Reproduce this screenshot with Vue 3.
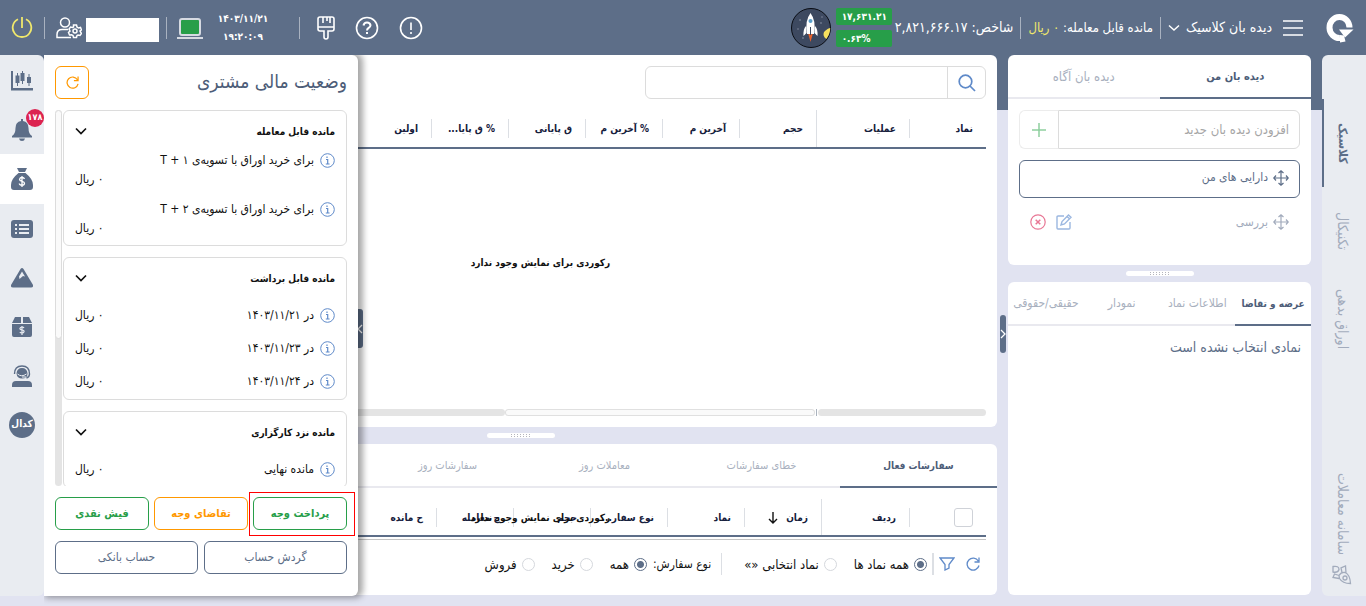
<script setup>
import { ref } from 'vue'

const marketColumns = ['نماد', 'عملیات', 'حجم', 'آخرین م', '% آخرین م', 'ق پایانی', '% ق پایا...', 'اولین']
const orderColumns = ['ردیف', 'زمان', 'نماد', 'نوع سفار...', 'حجم', 'ح معامله', 'ح مانده']
const orderTabs = ['سفارشات فعال', 'خطای سفارشات', 'معاملات روز', 'سفارشات روز', '', '']
const symbolTabs = ['عرضه و تقاضا', 'اطلاعات نماد', 'نمودار', 'حقیقی/حقوقی']
const emptyMessage = 'رکوردی برای نمایش وجود ندارد'

const cards = [
  {
    title: 'مانده قابل معامله',
    stacked: true,
    rows: [
      { label: 'برای خرید اوراق با تسویه‌ی', extra: 'T + ۱' },
      { label: 'برای خرید اوراق با تسویه‌ی', extra: 'T + ۲' },
    ],
  },
  {
    title: 'مانده قابل برداشت',
    rows: [
      { label: 'در', extra: '۱۴۰۳/۱۱/۲۱' },
      { label: 'در', extra: '۱۴۰۳/۱۱/۲۳' },
      { label: 'در', extra: '۱۴۰۳/۱۱/۲۴' },
    ],
  },
  { title: 'مانده نزد کارگزاری', rows: [{ label: 'مانده نهایی', extra: '' }] },
]

const scope = ref('all')
const side = ref('all')
const search = ref('')
const newList = ref('')
</script>

<template>
  <div class="app" dir="rtl">
    <header class="topbar">
      <div class="group start">
        <svg class="logo" viewBox="0 0 28 30">
          <path d="M23.500 14.500A10 10.500 0 1 0 14 25" fill="none" stroke="#fff" stroke-width="6" />
          <path d="M13 16.500h14.500l-8.500 8z" fill="#fff" />
          <path d="M14 22l4 .5 1.500 6-5.500 1z" fill="#fff" />
        </svg>
        <button class="plain menu" aria-label="menu">
          <svg width="20" height="18" viewBox="0 0 20 18"><path d="M0 2h20M0 9h20M0 16h20" stroke="#fff" stroke-width="1.500" /></svg>
        </button>
        <button class="plain title">
          دیده بان کلاسیک
          <svg width="12" height="8" viewBox="0 0 12 8"><path d="M1 1.500l5 4.500 5-4.500" fill="none" stroke="#fff" stroke-width="1.500" /></svg>
        </button>
        <i class="sep"></i>
        <span class="stat">مانده قابل معامله: <b class="yellow">۰ ریال</b></span>
        <i class="sep"></i>
        <span class="stat index">شاخص: <bdi dir="ltr">۲,۸۲۱,۶۶۶.۱۷</bdi></span>
        <div class="badges">
          <span class="badge" dir="ltr">۱۷,۶۳۱.۲۱</span>
          <span class="badge" dir="ltr">۰.۶۳%</span>
        </div>
        <svg class="rocket" viewBox="0 0 40 40">
          <circle cx="20" cy="20" r="19.500" fill="#3d4960" stroke="#0a0d14" />
          <g fill="#8d97a8"><circle cx="9" cy="12" r=".8" /><circle cx="30" cy="15" r=".8" /><circle cx="12" cy="30" r=".8" /><circle cx="31" cy="9" r=".7" /><circle cx="7" cy="21" r=".7" /></g>
          <path d="M33 24q4-4 6.300-4a19 19 0 0 1-4 11q-4-3-2.300-7z" fill="#f6e05e" />
          <path d="M17 25h5l-2.500 9z" fill="#e8622c" />
          <path d="M15 18q-3 3-2.500 10l3-3zM24 18q3 3 2.500 10l-3-3z" fill="#fff" />
          <path d="M19.500 5q-6 8-3.500 21h7q2.500-13-3.500-21z" fill="#fff" />
          <circle cx="19.500" cy="13" r="2" fill="#5aa0cc" />
          <path d="M19.500 19v8" stroke="#3d4960" stroke-width="1" />
        </svg>
      </div>
      <div class="group end">
        <button class="plain" aria-label="notice">
          <svg width="24" height="24" viewBox="0 0 24 24" fill="none" stroke="#fff" stroke-width="1.600"><circle cx="12" cy="12" r="10.500" /><path d="M12 6.500v7.500M12 16v2" /></svg>
        </button>
        <button class="plain" aria-label="help">
          <svg width="24" height="24" viewBox="0 0 24 24" fill="none" stroke="#fff" stroke-width="1.600"><circle cx="12" cy="12" r="10.500" /><path d="M8.500 9.500q.5-3 3.500-3t3.500 2.800q0 1.700-2 2.700-1.500.8-1.500 2.500M12 16v2" stroke-width="2" /></svg>
        </button>
        <button class="plain" aria-label="theme">
          <svg width="18" height="24" viewBox="0 0 18 24" fill="none" stroke="#fff" stroke-width="1.600"><path d="M1 13V3q0-2 2-2h12q2 0 2 2v10q0 2-2 2h-4v6q0 2-2 2t-2-2v-6H3q-2 0-2-2zM1 11h16M6 1v6M10 1v4M13 1v6" /></svg>
        </button>
        <i class="sep wide"></i>
        <time class="clock"><span>۱۴۰۳/۱۱/۲۱</span><span dir="ltr">۱۹:۲۰:۰۹</span></time>
        <svg width="26" height="24" viewBox="0 0 26 24"><rect x="3" y="3" width="20" height="16" rx="2" fill="#279e49" stroke="#d6dae2" stroke-width="2" /><path d="M0 22h26" stroke="#d6dae2" stroke-width="2" /></svg>
        <i class="sep"></i>
        <span class="name"></span>
        <svg class="user" width="26" height="22" viewBox="0 0 26 22" fill="none" stroke="#fff" stroke-width="1.500">
          <circle cx="9" cy="5.500" r="4.500" />
          <path d="M15 20.500H1v-3q0-5 5-5h6" />
          <circle cx="19" cy="14" r="2" />
          <path d="M17.500 8h3l.5 2 1.500 1 2-.5 1 2.500-1.500 1 1.500 2.500-1.500 2-2-.5-1 .5-.5 2h-3l-.5-2-1.500-.8-2 .3-1-2.500 1.500-1.500-1-2 1.500-2 2 .5 1-.5z" />
        </svg>
        <i class="sep"></i>
        <button class="plain" aria-label="exit">
          <svg width="22" height="22" viewBox="0 0 22 22" fill="none" stroke="#f0e86c" stroke-width="1.800"><path d="M11 0v11M7 2.300a9.300 9.300 0 1 0 8 0" /></svg>
        </button>
      </div>
    </header>

    <main class="body">
      <nav class="modes">
        <a href="#" class="mode on">کلاسیک</a>
        <a href="#" class="mode">تکنیکال</a>
        <a href="#" class="mode">اوراق بدهی</a>
        <a href="#" class="mode system">
          سامانه معاملات
          <svg width="20" height="20" viewBox="0 0 20 20" fill="none" stroke="#a2abbc" stroke-width="1.300"><path d="M18.500 18.500q-8 0-11-5l-.5-3q2-3.500 6-3 5 2 5.500 11zM7 10.500L2.500 9 1 12.500l6 1M10 7.500L9 3l4.500-2L14 8M1 7V1.500q6-1 6 3Q6 8 1 7z" /><circle cx="13" cy="13" r="2" /></svg>
        </a>
      </nav>

      <section class="watch">
        <div class="card">
          <div class="tabs two">
            <button class="tab on">دیده بان من</button>
            <button class="tab">دیده بان آگاه</button>
          </div>
          <div class="lists">
            <div class="add">
              <input v-model="newList" aria-label="افزودن دیده بان جدید" placeholder="افزودن دیده بان جدید" />
              <button aria-label="add"><svg width="14" height="14" viewBox="0 0 14 14"><path d="M7 0v14M0 7h14" stroke="#8ecf9f" stroke-width="1.500" /></svg></button>
            </div>
            <div class="item on">
              <svg width="16" height="16" viewBox="0 0 16 16" fill="none" stroke="currentColor" stroke-width="1.200"><path d="M8 1v14M1 8h14M5.500 3L8 .8 10.500 3M5.500 13L8 15.200l2.500-2.200M3 5.500L.8 8 3 10.500M13 5.500L15.200 8 13 10.500" /></svg>
              <span>دارایی های من</span>
            </div>
            <div class="item">
              <svg width="16" height="16" viewBox="0 0 16 16" fill="none" stroke="currentColor" stroke-width="1.200"><path d="M8 1v14M1 8h14M5.500 3L8 .8 10.500 3M5.500 13L8 15.200l2.500-2.200M3 5.500L.8 8 3 10.500M13 5.500L15.200 8 13 10.500" /></svg>
              <span class="grow">بررسی</span>
              <button class="plain" aria-label="edit"><svg width="16" height="16" viewBox="0 0 16 16" fill="none" stroke="#9bb7e0" stroke-width="1.400"><path d="M8 2H2q-1 0-1 1v11q0 1 1 1h11q1 0 1-1V8M5 11l1-3.500L12.500 1 15 3.200 8.500 10zM11 2.500l2.500 2.200" /></svg></button>
              <button class="plain" aria-label="delete"><svg width="16" height="16" viewBox="0 0 16 16" fill="none" stroke="#e87795" stroke-width="1.200"><circle cx="8" cy="8" r="7.200" /><path d="M5.700 5.700l4.600 4.600M10.300 5.700l-4.600 4.600" stroke-width="1.500" /></svg></button>
            </div>
          </div>
        </div>
        <div class="split"><i class="grip"></i></div>
        <div class="card fill">
          <div class="tabs four">
            <button v-for="(t, i) in symbolTabs" :key="t" class="tab" :class="{ on: i === 0 }">{{ t }}</button>
          </div>
          <p class="none">نمادی انتخاب نشده است</p>
        </div>
      </section>

      <div class="gutter">
        <button class="fold" aria-label="fold"><svg width="6" height="10" viewBox="0 0 6 10"><path d="M1 1l4 4-4 4" fill="none" stroke="#fff" stroke-width="1.300" /></svg></button>
      </div>

      <section class="center">
        <div class="card fill market">
          <div class="find">
            <button aria-label="search"><svg width="18" height="18" viewBox="0 0 18 18" fill="none" stroke="#5f8ac9" stroke-width="1.700"><circle cx="7.500" cy="7.500" r="6.300" /><path d="M12 12l5 5" /></svg></button>
            <input v-model="search" aria-label="search symbol" />
          </div>
          <table class="grid">
            <colgroup><col class="c77" /><col class="c93" /><col v-for="n in 6" :key="n" class="c77" /><col /></colgroup>
            <thead><tr><th v-for="(c, i) in marketColumns" :key="c" :class="{ pin: i === 1 }">{{ c }}</th><th></th></tr></thead>
          </table>
          <p class="empty">{{ emptyMessage }}</p>
          <div class="hscroll"><i class="fixed"></i><i class="bar"></i><i class="thumb"></i><i class="track"></i></div>
        </div>
        <div class="split"><i class="grip"></i></div>
        <div class="card">
          <div class="tabs six">
            <button v-for="(t, i) in orderTabs" :key="i" class="tab" :class="{ on: i === 0 }">{{ t }}</button>
          </div>
          <div class="orders">
            <table class="grid">
              <colgroup><col class="c77" /><col class="c88" /><col v-for="n in 6" :key="n" class="c77" /><col /></colgroup>
              <thead>
                <tr>
                  <th><input type="checkbox" class="check" aria-label="select all" /></th>
                  <th v-for="(c, i) in orderColumns" :key="c" :class="{ pin: i === 0 }">
                    {{ c }}<svg v-if="i === 1" class="arrow" width="10" height="12" viewBox="0 0 10 12"><path d="M5 0v10.500M1 7l4 4 4-4" fill="none" stroke="#111" stroke-width="1.400" /></svg>
                  </th>
                </tr>
              </thead>
            </table>
            <p class="over">{{ emptyMessage }}</p>
          </div>
          <div class="filters">
            <svg width="14" height="14" viewBox="0 0 14 14" fill="none" stroke="#5f8ac9" stroke-width="1.300"><path d="M12.300 4A6 6 0 1 0 13 8.500M13 .5V5H8.500" /></svg>
            <svg width="16" height="14" viewBox="0 0 16 14" fill="none" stroke="#5f8ac9" stroke-width="1.300"><path d="M1 1h14L10 7.500V11l-4 2V7.500z" /></svg>
            <i class="line thick"></i>
            <label><input v-model="scope" type="radio" name="scope" value="all" />همه نماد ها</label>
            <label class="far"><input v-model="scope" type="radio" name="scope" value="one" />نماد انتخابی «»</label>
            <i class="line apart"></i>
            <span>نوع سفارش:</span>
            <label><input v-model="side" type="radio" name="side" value="all" />همه</label>
            <label class="far"><input v-model="side" type="radio" name="side" value="buy" />خرید</label>
            <label class="far"><input v-model="side" type="radio" name="side" value="sell" />فروش</label>
          </div>
        </div>
      </section>

      <nav class="tools">
        <a href="#" class="tool" aria-label="chart"><svg width="22" height="20" viewBox="0 0 22 20" fill="#5d6e88"><path d="M0 0h2v17h20v2.500H0zM6 2h1v2.500h1.500V12H7v3H6v-3H4.500V4.500H6zM11 0h1v2h1.500v8H12v3h-1v-3H9.500V2H11zM17.500 3h1v3H20v6h-1.500v3h-1v-3H16V6h1.500z" /></svg></a>
        <a href="#" class="tool" aria-label="alerts">
          <svg width="20" height="22" viewBox="0 0 20 22" fill="#5d6e88"><path d="M9 0h2v2q5.500 1 5.500 7 0 6 3.500 8v1.500H0V17q3.500-2 3.500-8 0-6 5.500-7zM7 19.500h6q-.5 2.500-3 2.500t-3-2.500z" /></svg>
          <span class="count">۱۷۸</span>
        </a>
        <a href="#" class="tool on" aria-label="money"><svg width="22" height="22" viewBox="0 0 22 22"><path d="M6 0h10l-2 4H8zM7.500 5h7q7.500 6 7.500 12v2q0 3-3 3H3q-3 0-3-3v-2Q0 11 7.500 5z" fill="#5d6e88" /><path d="M13.500 11q-.5-1.500-2.500-1.500T8.500 11.300q0 1.500 2.500 2t2.500 2q0 1.900-2.500 1.900t-2.700-1.700M11 8v11" fill="none" stroke="#fff" stroke-width="1.300" /></svg></a>
        <a href="#" class="tool" aria-label="list"><svg width="22" height="18" viewBox="0 0 22 18"><rect width="22" height="18" rx="3" fill="#5d6e88" /><path d="M4 5h2M8 5h10M4 9h2M8 9h10M4 13h2M8 13h10" stroke="#e9ecf1" stroke-width="1.800" /></svg></a>
        <a href="#" class="tool" aria-label="summit"><svg width="22" height="20" viewBox="0 0 22 20"><path d="M9.500 1Q11-1 12.500 1L22 17q.5 2.500-2 2.500H2Q-.5 19.500 0 17z" fill="#5d6e88" /><path d="M11 3.500l3 5-2-.5-3.500 3-.5-2.500z" fill="#e9ecf1" /></svg></a>
        <a href="#" class="tool" aria-label="package"><svg width="20" height="20" viewBox="0 0 20 20"><path d="M3 0h6v6H0zM11 0h6l3 6h-9zM0 7h20v11q0 2-2 2H2q-2 0-2-2z" fill="#5d6e88" /><path d="M12 11q-.5-1-2-1t-2 1.300 2 1.700 2 1.700-2 1.300-2.200-1M10 9v9" fill="none" stroke="#e9ecf1" stroke-width="1.200" /></svg></a>
        <a href="#" class="tool" aria-label="support"><svg width="20" height="22" viewBox="0 0 20 22"><path d="M2.500 9q0-8 7.500-8t7.500 8q0 3-3 4" fill="none" stroke="#5d6e88" stroke-width="1.400" /><path d="M4.500 8.500Q5 3 10 3t5.500 5.500q0 5-5.500 5Q5 13.500 4.500 8.500zM0 22v-2q0-4 4-4h12q4 0 4 4v2z" fill="#5d6e88" /><path d="M5.500 9q4 3.500 9 0M10 12h4" fill="none" stroke="#e9ecf1" /></svg></a>
        <a href="#" class="tool"><span class="codal">کدال</span></a>
      </nav>

      <aside class="drawer">
        <button class="fold left" aria-label="close"><svg width="6" height="10" viewBox="0 0 6 10"><path d="M5 1L1 5l4 4" fill="none" stroke="#fff" stroke-width="1.300" /></svg></button>
        <div class="panel">
          <div class="head">
            <h2>وضعیت مالی مشتری</h2>
            <button class="reload" aria-label="reload"><svg width="13" height="13" viewBox="0 0 14 14" fill="none" stroke="#ff9800" stroke-width="1.300"><path d="M12.300 4A6 6 0 1 0 13 8.500M13 .5V5H8.500" /></svg></button>
          </div>
          <div class="scroll">
            <div class="stack">
              <article v-for="c in cards" :key="c.title" class="box" :class="{ stacked: c.stacked }">
                <h3>{{ c.title }}<svg width="12" height="8" viewBox="0 0 12 8"><path d="M1 1.500l5 5 5-5" fill="none" stroke="#111" stroke-width="1.700" /></svg></h3>
                <ul>
                  <li v-for="(r, i) in c.rows" :key="i">
                    <svg class="info" width="15" height="15" viewBox="0 0 15 15" fill="none" stroke="#5f8ac9"><circle cx="7.500" cy="7.500" r="6.800" /><path d="M6 6.500h1.700V11M5.800 11h3.800M7 3.500v1.500" stroke-width="1.200" /></svg>
                    <span class="label">{{ r.label }} <bdi v-if="r.extra" dir="ltr">{{ r.extra }}</bdi></span>
                    <span class="value">۰ ریال</span>
                  </li>
                </ul>
              </article>
            </div>
            <div class="vscroll"><i></i></div>
          </div>
          <div class="actions three">
            <div class="marked"><button class="act green">پرداخت وجه</button></div>
            <button class="act orange">تقاضای وجه</button>
            <button class="act green">فیش نقدی</button>
          </div>
          <div class="actions">
            <button class="act">گردش حساب</button>
            <button class="act">حساب بانکی</button>
          </div>
        </div>
      </aside>
    </main>
  </div>
</template>

<style>
body { margin: 0; background: #e1e3f1; }
</style>

<style scoped>
* { box-sizing: border-box; }
.app {
  display: flex;
  flex-direction: column;
  height: 100vh;
  overflow: hidden;
  background: linear-gradient(#5d6e88 110px, #e1e3f1 110px);
  color: #111;
  font: 12px/19px 'DejaVu Sans Condensed', 'DejaVu Sans', sans-serif;
}
button, input { font: inherit; color: inherit; margin: 0; }
a { text-decoration: none; color: inherit; }
i { font-style: normal; }
p, h2, h3, ul { margin: 0; padding: 0; }
svg { flex: none; display: block; }
button { background: none; cursor: pointer; padding: 0; border: 0; }
.plain { display: flex; align-items: center; gap: 6px; }

.topbar { display: flex; justify-content: space-between; align-items: center; height: 55px; flex: none; color: #fff; padding: 0 11px; }
.group { display: flex; align-items: center; }
.start { padding-right: 1px; font-size: 13px; }
.logo { width: 28px; height: 30px; }
.menu { margin-right: 23px; }
.title { margin-right: 11px; white-space: nowrap; font-size: 14px; }
.sep { width: 1px; height: 22px; background: #a9b2c0; margin: 0 5px; }
.start .sep { margin: 0 7px; }
.stat { white-space: nowrap; }
.index { font-size: 14px; }
.yellow { color: #f0e86c; font-weight: 400; }
.badges { display: flex; flex-direction: column; gap: 5px; margin: 0 3px 0 5px; }
.badge { width: 56px; height: 17px; line-height: 17px; border-radius: 2px; background: #279e49; padding-left: 6px; font-size: 10px; font-weight: 700; text-align: left; }
.rocket { width: 40px; height: 40px; }
.end > .plain + .plain { margin-right: 20px; }
.clock { display: flex; flex-direction: column; align-items: center; line-height: 18px; font-size: 10px; font-weight: 700; margin-left: 14px; width: 52px; }
.end > .sep { margin: 0 10px 0 7px; }
.end > .wide.sep { margin: 0 17px 0 30px; }
.name { width: 73px; height: 24px; background: #fff; margin-left: 4px; margin-top: 4px; }
.end > .user + .sep { margin: 0 11px; }

.body { position: relative; flex: 1; min-height: 0; display: flex; padding-bottom: 10px; }
.card { background: #fff; border-radius: 6px; }
.fill { flex: 1; min-height: 0; }
.modes { width: 44px; flex: none; background: #e9ecf1; border-radius: 6px 0 0 6px; display: flex; flex-direction: column; padding-top: 44px; margin-left: 11px; color: #a2abbc; font-size: 14px; }
.mode { height: 88px; writing-mode: vertical-rl; display: flex; align-items: center; justify-content: center; border-left: 2px solid transparent; padding-right: 6px; }
.mode.on { color: #5d6e88; font-size: 12px; font-weight: 700; border-color: #5d6e88; }
.system { margin-top: auto; height: 130px; gap: 10px; flex-direction: row-reverse; margin-bottom: 2px; }

.watch { width: 303px; flex: none; display: flex; flex-direction: column; padding-bottom: 1px; }
.tabs { display: grid; height: 44px; }
.two { grid-template-columns: 1fr 1fr; }
.four { grid-template-columns: repeat(4, 1fr); }
.six { grid-template-columns: repeat(6, 1fr); }
.tab { border-bottom: 2px solid #e9e9ef; color: #a8b0be; white-space: nowrap; }
.tab.on { border-color: #5d6e88; color: #4d5d78; font-weight: 700; }
.two .on { font-size: 11px; }
.two .tab:not(.on) { font-size: 13px; }
.four .on, .six .on { font-size: 10px; }
.six .tab:not(.on) { font-size: 11px; }
.lists { padding: 11px 11px 22px; }
.add { display: flex; height: 39px; margin-bottom: 11px; }
.add input { flex: 1; min-width: 0; border: 1px solid #dcdcdc; border-radius: 0 6px 6px 0; padding: 0 10px; outline: 0; background: #fff; font-size: 13px; }
.add input::placeholder { color: #a6a6a6; opacity: 1; }
.add button { width: 39px; border: 1px solid #ececec; border-right: 0; border-radius: 6px 0 0 6px; display: grid; place-items: center; }
.item { height: 38px; display: flex; align-items: center; gap: 5px; padding: 0 10px 3px; color: #a2abbc; border: 1px solid transparent; border-radius: 6px; margin-bottom: 6px; }
.item.on { border-color: #5d6e88; color: #5d6e88; }
.item:last-child { margin-bottom: 0; height: 39px; }
.item .plain + .plain { margin-right: 5px; }
.grow { flex: 1; }
.split { height: 17px; flex: none; display: grid; place-items: center; }
.grip {
  width: 68px;
  height: 5px;
  border-radius: 3px;
  background:
    linear-gradient(#fff 1px, transparent 1px 2px, #fff 2px 3px, transparent 3px 4px, #fff 4px),
    linear-gradient(#fff, #fff) left / 24px 100% no-repeat,
    linear-gradient(#fff, #fff) right / 24px 100% no-repeat,
    repeating-linear-gradient(90deg, #b4b4bc 0 1px, #fff 1px 3px);
}
.none { padding: 12px 10px; color: #5d6e88; font-size: 14px; }

.gutter { width: 11px; flex: none; position: relative; }
.fold { position: absolute; right: 2px; top: 260px; width: 6px; height: 38px; border-radius: 3px; background: #5d6e88; display: grid; place-items: center; }
.fold.left { right: -5px; top: 254px; width: 12px; height: 39px; justify-items: start; }

.center { flex: 1; min-width: 0; display: flex; flex-direction: column; padding-bottom: 1px; }
.center > .card { margin-left: 11px; }
.market { display: flex; flex-direction: column; padding: 11px; }
.find { display: flex; width: 341px; height: 33px; border: 1px solid #dcdcdc; border-radius: 6px; margin-bottom: 11px; flex: none; }
.find button { width: 38px; border-left: 1px solid #dcdcdc; display: grid; place-items: center; }
.find input { flex: 1; min-width: 0; border: 0; background: none; outline: 0; }
.grid { width: 100%; table-layout: fixed; border-collapse: collapse; border-bottom: 2px solid #5d6e88; }
.c77 { width: 77px; }
.c88 { width: 88px; }
.c93 { width: 93px; }
.grid th { height: 38px; padding: 0 13px 0 0; text-align: right; white-space: nowrap; font-size: 10px; color: #16203c; background: linear-gradient(#dcdfe4, #dcdfe4) left center / 1px 19px no-repeat; }
.grid th.pin { background-size: 1px 100%; }
.grid th:last-child { background: none; }
.empty { flex: 1; display: flex; align-items: center; justify-content: center; padding-left: 29px; padding-bottom: 33px; font-size: 10px; font-weight: 700; }
.hscroll { display: flex; height: 7px; }
.hscroll i { border-radius: 4px; }
.hscroll .fixed { width: 168px; background: #e4e4e4; }
.hscroll .bar { width: 1px; background: #aab2bd; border-radius: 0; margin: 0 1px; }
.hscroll .thumb { width: 310px; background: #fafafa; box-shadow: inset 0 0 0 1px #e0e0e0; }
.hscroll .track { flex: 1; background: #e4e4e4; }
.orders { position: relative; padding: 0 11px; margin-top: 11px; }
.orders .grid th { height: 37px; }
.orders::after { content: ''; display: block; height: 2px; border-bottom: 1px solid #c4c4c4; }
.orders .arrow { display: inline-block; margin-right: 8px; vertical-align: middle; }
.check { appearance: none; display: block; width: 19px; height: 19px; border: 1px solid #cfd2d8; border-radius: 3px; background: #fff; }
.over { position: absolute; inset: 9px 11px auto; text-align: center; padding-left: 29px; font-size: 10px; font-weight: 700; }
.filters { display: flex; align-items: center; height: 55px; padding: 0 17px 7px; white-space: nowrap; }
.filters > svg + svg { margin-right: 11px; }
.filters .line { width: 1px; height: 22px; background: #dcdfe4; margin: 0 5px; }
.filters .thick { width: 2px; }
.filters .apart { margin: 0 22px 0 10px; }
.filters label { display: flex; align-items: center; gap: 5px; font-size: 13px; }
.filters .far { margin-right: 17px; }
.filters span { margin-left: 6px; }
.filters input { appearance: none; width: 13px; height: 13px; border: 1px solid #d5d8dd; border-radius: 50%; background: #fff; }
.filters input:checked { border-color: #5d6e88; background: radial-gradient(circle, #5d6e88 3px, #fff 4px); }

.tools { width: 44px; flex: none; background: #e9ecf1; border-radius: 0 6px 6px 0; padding-top: 1px; }
.tool { display: grid; place-items: center; height: 49px; position: relative; }
.tool.on { background: #fff; height: 50px; }
.count { position: absolute; right: 0; top: 4px; width: 18px; height: 18px; border-radius: 50%; background: #dc2350; color: #fff; font-size: 9px; line-height: 16px; font-weight: 700; display: flex; justify-content: center; }
.codal { width: 26px; height: 26px; border-radius: 50%; background: #5d6e88; color: #fff; font-weight: 700; font-size: 10px; line-height: 24px; text-align: center; }

.drawer { position: absolute; left: 44px; top: 0; bottom: 10px; width: 314px; }
.panel { position: relative; height: 100%; display: flex; flex-direction: column; gap: 11px; padding: 11px 11px 22px; background: #fff; border-radius: 0 6px 6px 0; box-shadow: 3px 0 6px 2px rgba(0, 0, 0, .35); clip-path: inset(0 -14px -10px 0); }
.head { display: flex; justify-content: space-between; align-items: center; height: 33px; }
.head h2 { font-size: 19px; font-weight: 400; color: #4d5d78; line-height: 28px; padding-bottom: 4px; }
.reload { width: 34px; height: 33px; border: 1px solid #ff9800; border-radius: 6px; display: grid; place-items: center; }
.scroll { flex: 1; min-height: 0; display: flex; gap: 1px; overflow: hidden; }
.stack { flex: 1; display: flex; flex-direction: column; gap: 11px; }
.vscroll { width: 7px; background: #e4e4e4; border-radius: 4px; }
.vscroll i { display: block; height: 61%; border-radius: 4px; background: #fafafa; border: 1px solid #dcdcdc; }
.box { border: 1px solid #dcdcdc; border-radius: 6px; padding: 0 11px 8px; flex: none; }
.box h3 { display: flex; align-items: center; justify-content: space-between; height: 40px; font-size: 10px; font-weight: 700; }
.box ul { list-style: none; display: flex; flex-direction: column; gap: 14px; padding-top: 8px; }
.box li { display: flex; align-items: center; flex-wrap: wrap; }
.info { margin-left: 6px; }
.value { margin-right: auto; }
.stacked { padding-bottom: 7px; }
.stacked ul { padding-top: 0; gap: 11px; }
.stacked .label { width: calc(100% - 21px); }
.actions { display: grid; grid-template-columns: 1fr 1fr; gap: 6px; height: 33px; flex: none; }
.three { grid-template-columns: repeat(3, 1fr); gap: 5px; font-size: 11px; font-weight: 700; }
.marked { position: relative; display: grid; }
.marked::after { content: ''; position: absolute; inset: -5px -8px -6px -4px; border: 1px solid #f00; pointer-events: none; }
.act { border: 1px solid #5d6e88; border-radius: 6px; color: #5d6e88; }
.green { border-color: #279e49; color: #279e49; }
.orange { border-color: #ff9800; color: #ff9800; }
</style>
